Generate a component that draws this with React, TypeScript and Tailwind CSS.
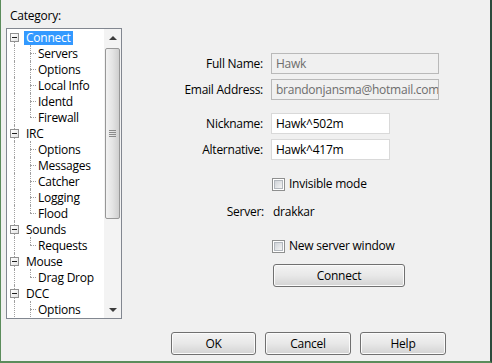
import React from "react";

type Node = { label: string; children: string[]; selected?: boolean };

const tree: Node[] = [
  {
    label: "Connect",
    children: ["Servers", "Options", "Local Info", "Identd", "Firewall"],
    selected: true,
  },
  { label: "IRC", children: ["Options", "Messages", "Catcher", "Logging", "Flood"] },
  { label: "Sounds", children: ["Requests"] },
  { label: "Mouse", children: ["Drag Drop"] },
  { label: "DCC", children: ["Options"] },
];

const dot = "border-[#a0a0a0] border-dotted";

function ExpandBox() {
  return (
    <span className="relative z-10 flex h-[9px] w-[9px] items-center justify-center border border-[#919191] bg-linear-to-br from-white to-[#e4e4e4]">
      <span className="h-px w-[5px] bg-[#1e1e1e]" />
    </span>
  );
}

function ParentRow({ node, first }: { node: Node; first: boolean }) {
  return (
    <div className="flex h-4 items-stretch">
      <div className="flex w-[17px] flex-col pl-[3px]">
        <div className="flex h-[4px] pl-[4px]">
          {!first && <span className={`h-full border-l ${dot}`} />}
        </div>
        <ExpandBox />
        <div className="flex flex-1 pl-[4px]">
          <span className={`h-full border-l ${dot}`} />
        </div>
      </div>
      <div className="flex items-center pt-px">
        <span
          className={
            node.selected
              ? "bg-[#3399ff] px-[2px] leading-[14px] text-white"
              : "px-[2px] leading-[14px]"
          }
        >
          {node.label}
        </span>
      </div>
    </div>
  );
}

function ChildRow({ label, last }: { label: string; last: boolean }) {
  return (
    <div className="flex h-4 items-stretch">
      <div className="flex w-[16px] pl-[7px]">
        <span className={`h-full border-l ${dot}`} />
      </div>
      <div className="flex w-[13px] flex-col pl-[7px]">
        <span className={`h-[8px] border-l ${dot}`} />
        <span className={`w-[6px] border-t ${dot} ${last ? "" : "border-l flex-1"}`} />
      </div>
      <div className="flex items-center px-[2px] pt-px leading-[14px]">{label}</div>
    </div>
  );
}

function Scrollbar() {
  return (
    <div className="flex w-[17px] flex-col items-center bg-[#f3f3f3]">
      <div className="flex h-[17px] w-full items-center justify-center">
        <span className="h-0 w-0 border-x-[4px] border-b-[4px] border-x-transparent border-b-[#3c3c3c]" />
      </div>
      <div className="flex w-full flex-1 flex-col px-[1px]">
        <div className="mt-[2px] flex h-[171px] items-center justify-center rounded-[2px] border border-[#979797] bg-linear-to-r from-[#f2f2f2] via-[#e4e4e4] to-[#cfcfcf]">
          <div className="flex flex-col gap-[1px]">
            <span className="h-px w-[7px] bg-[#8a8a8a]" />
            <span className="h-px w-[7px] bg-[#8a8a8a]" />
            <span className="h-px w-[7px] bg-[#8a8a8a]" />
            <span className="h-px w-[7px] bg-[#8a8a8a]" />
          </div>
        </div>
      </div>
      <div className="flex h-[17px] w-full items-center justify-center">
        <span className="h-0 w-0 border-x-[4px] border-t-[4px] border-x-transparent border-t-[#3c3c3c]" />
      </div>
    </div>
  );
}

function Checkbox({ label }: { label: string }) {
  return (
    <div className="flex items-center gap-[4px]">
      <span className="flex h-[13px] w-[13px] border border-[#8e8f8f] bg-white p-px">
        <span className="flex-1 border border-[#b2b7bd] bg-linear-to-br from-[#cfd3d8] to-[#f4f4f4]" />
      </span>
      <span>{label}</span>
    </div>
  );
}

function Button({ label, className }: { label: string; className: string }) {
  return (
    <button
      type="button"
      className={`flex items-center justify-center rounded-[3px] border border-[#707070] bg-linear-to-b from-[#f3f3f3] via-[#e8e8e8] to-[#d3d3d3] shadow-[inset_0_0_0_1px_#fbfbfb] ${className}`}
    >
      {label}
    </button>
  );
}

function Field({
  label,
  value,
  disabled,
  width,
}: {
  label: string;
  value: string;
  disabled?: boolean;
  width: string;
}) {
  return (
    <div className="flex h-[21px] items-center">
      <span className="w-[142px] pr-[1px] text-right">{label}</span>
      <span
        className={`ml-[7px] flex h-full items-center overflow-hidden whitespace-nowrap border pl-[4px] ${width} ${
          disabled
            ? "border-[#b9b9b9] bg-[#f0f0f0] text-[#6d6d6d]"
            : "border-[#d9d9d9] bg-white"
        }`}
      >
        {value}
      </span>
    </div>
  );
}

export default function App() {
  return (
    <div className="flex h-[363px] w-[492px] flex-col border-b-2 border-l border-r-2 border-b-[#5b8c5b] border-l-[#5b8c5b] border-r-[#2d4a3c] bg-[#f0f0f0] font-['Open_Sans',sans-serif] text-[12px] tracking-[-0.25px] text-black">
      <div className="flex">
        <div className="flex w-[121px] flex-col pl-[5px] pt-[8px]">
          <div className="h-[16px] pl-[4px] leading-[16px]">Category:</div>
          <div className="mt-[4px] flex h-[291px] w-[116px] border border-[#828790] bg-white">
            <div className="flex-1 overflow-hidden">
              {tree.map((node, i) => (
                <div key={node.label}>
                  <ParentRow node={node} first={i === 0} />
                  {node.children.map((c, j) => (
                    <ChildRow
                      key={c + j}
                      label={c}
                      last={j === node.children.length - 1 && i !== tree.length - 1}
                    />
                  ))}
                </div>
              ))}
            </div>
            <Scrollbar />
          </div>
        </div>

        <div className="flex flex-1 flex-col pt-[53px]">
          <Field label="Full Name:" value="Hawk" disabled width="w-[168px]" />
          <div className="mt-[5px]">
            <Field
              label="Email Address:"
              value="brandonjansma@hotmail.com"
              disabled
              width="w-[168px]"
            />
          </div>
          <div className="mt-[13px]">
            <Field label="Nickname:" value="Hawk^502m" width="w-[119px]" />
          </div>
          <div className="mt-[5px]">
            <Field label="Alternative:" value="Hawk^417m" width="w-[119px]" />
          </div>
          <div className="mt-[15px] pl-[150px]">
            <Checkbox label="Invisible mode" />
          </div>
          <div className="mt-[10px] flex h-[18px] items-center">
            <span className="w-[142px] text-right">Server:</span>
            <span className="ml-[9px]">drakkar</span>
          </div>
          <div className="mt-[16px] pl-[150px]">
            <Checkbox label="New server window" />
          </div>
          <div className="mt-[9px] pl-[151px]">
            <Button label="Connect" className="h-[23px] w-[132px]" />
          </div>
        </div>
      </div>

      <div className="mt-[13px] flex gap-[9px] pl-[170px]">
        <Button label="OK" className="h-[23px] w-[85px]" />
        <Button label="Cancel" className="h-[23px] w-[86px]" />
        <Button label="Help" className="h-[23px] w-[86px]" />
      </div>
    </div>
  );
}
